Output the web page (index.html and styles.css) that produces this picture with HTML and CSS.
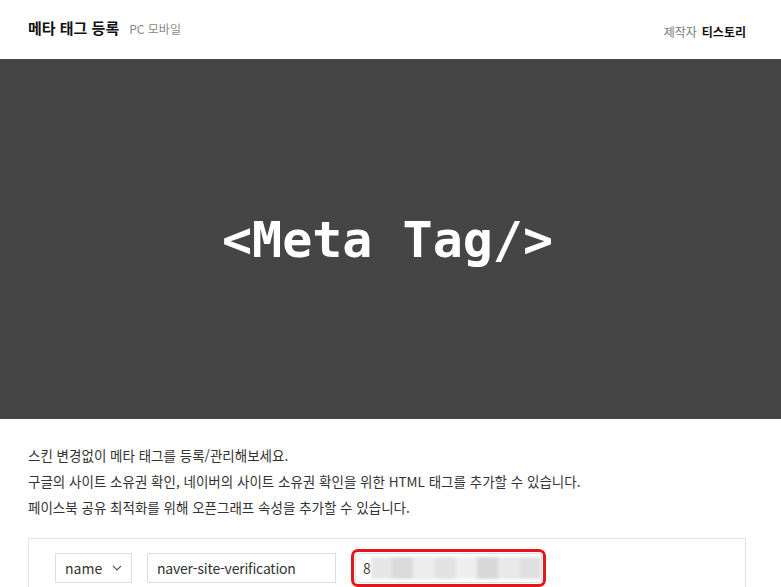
FILE: index.html
```html
<!DOCTYPE html>
<html lang="ko">
<head>
    <meta charset="UTF-8">
    <title>메타 태그 등록</title>
    <link rel="stylesheet" href="styles.css">
</head>
<body>
    <header class="top-bar">
        <div class="plugin-title">
            <h1>메타 태그 등록</h1>
            <span class="platform">PC 모바일</span>
        </div>
        <div class="maker">
            <span class="maker-label">제작자</span>
            <strong>티스토리</strong>
        </div>
    </header>

    <div class="banner">
        <span class="banner-text">&lt;Meta Tag/&gt;</span>
    </div>

    <div class="desc">
        <p>스킨 변경없이 메타 태그를 등록/관리해보세요.</p>
        <p>구글의 사이트 소유권 확인, 네이버의 사이트 소유권 확인을 위한 HTML 태그를 추가할 수 있습니다.</p>
        <p>페이스북 공유 최적화를 위해 오픈그래프 속성을 추가할 수 있습니다.</p>
    </div>

    <div class="tag-box">
        <div class="tag-row">
            <div class="tag-select">
                <span>name</span>
                <svg width="10" height="6" viewBox="0 0 10 6"><path d="M1 1l4 4 4-4" fill="none" stroke="#555" stroke-width="1.1"/></svg>
            </div>
            <div class="tag-input">naver-site-verification</div>
            <div class="tag-input tag-value">
                <span class="first-char">8</span>
                <span class="masked">
                    <i class="m1"></i><i class="m2"></i><i class="m3"></i><i class="m4"></i><i class="m5"></i><i class="m6"></i><i class="m7"></i><i class="m8"></i>
                </span>
            </div>
        </div>
    </div>
</body>
</html>
```

FILE: styles.css
```css
body {
    margin: 0;
    font-family: "Noto Sans CJK KR", "Noto Sans", sans-serif;
    color: #333;
    background: #fff;
}
.top-bar {
    height: 59px;
    padding: 0 35px 0 28px;
    display: flex;
    align-items: center;
    justify-content: space-between;
}
.plugin-title {
    display: flex;
    align-items: baseline;
    margin-top: -4px;
}
.plugin-title h1 {
    margin: 0;
    font-size: 15px;
    font-weight: bold;
    color: #111;
}
.platform {
    margin-left: 10px;
    font-size: 12px;
    color: #888;
}
.maker {
    display: flex;
    align-items: baseline;
    gap: 5px;
    font-size: 12px;
    margin-top: 4px;
}
.maker-label {
    color: #777;
}
.maker strong {
    color: #111;
}
.banner {
    height: 360px;
    background: #454545;
    display: flex;
    align-items: center;
    justify-content: center;
}
.banner-text {
    font-family: "DejaVu Sans Mono", monospace;
    font-weight: bold;
    font-size: 50px;
    color: #fff;
    margin: 2px 6px 0 0;
}
.desc {
    padding: 23px 28px 0;
}
.desc p {
    margin: 0;
    font-size: 13.5px;
    line-height: 26px;
    color: #333;
}
.tag-box {
    margin: 18px 35px 0 28px;
    border: 1px solid #e3e3e3;
    padding: 14px 26px;
    height: 60px;
}
.tag-row {
    display: flex;
    gap: 15px;
    align-items: center;
}
.tag-select,
.tag-input {
    border: 1px solid #ddd;
    box-sizing: border-box;
    height: 30px;
    display: flex;
    align-items: center;
    font-size: 14px;
    color: #333;
    padding: 0 9px;
}
.tag-select {
    width: 77px;
    justify-content: space-between;
}
.tag-input {
    width: 189px;
    letter-spacing: -0.2px;
}
.tag-value {
    width: 187px;
    margin-left: 4px;
    outline: 3px solid #e4151b;
    outline-offset: 1px;
    border-radius: 3px;
    padding: 0 0 0 7px;
    overflow: hidden;
}
.first-char {
    color: #444;
}
.masked {
    display: flex;
    height: 22px;
    flex: 1;
    filter: blur(1.5px);
}
.masked i {
    display: block;
    height: 100%;
    flex: 1;
}
.m1 { background: #e6e6e6; }
.m2 { background: #dadada; }
.m3 { background: #ececec; }
.m4 { background: #e2e2e2; }
.m5 { background: #eeeeee; }
.m6 { background: #d8d8d8; }
.m7 { background: #e9e9e9; }
.m8 { background: #e0e0e0; }
```
